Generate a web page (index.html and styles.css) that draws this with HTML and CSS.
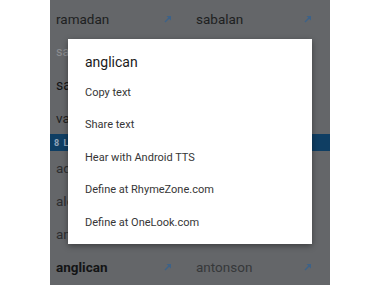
FILE: index.html
```html
<!DOCTYPE html>
<html>
<head>
<meta charset="utf-8">
<link rel="stylesheet" href="styles.css">
</head>
<body>
<div class="screen">
  <div class="list">
    <div class="row">
      <div class="cell"><span class="w w-dark">ramadan</span><svg class="arr" viewBox="0 0 8 8"><path d="M1 7 L5.8 2.2" stroke="currentColor" stroke-width="1.4"/><path d="M2.6 1 H7 V5.4 Z" fill="currentColor"/></svg></div>
      <div class="cell"><span class="w w-dark">sabalan</span><svg class="arr" viewBox="0 0 8 8"><path d="M1 7 L5.8 2.2" stroke="currentColor" stroke-width="1.4"/><path d="M2.6 1 H7 V5.4 Z" fill="currentColor"/></svg></div>
    </div>
    <div class="row">
      <div class="cell"><span class="w w-light">samarkand</span></div>
      <div class="cell"><span class="w w-light">sandarac</span></div>
    </div>
    <div class="row">
      <div class="cell"><span class="w w-black">sarafan</span></div>
      <div class="cell"><span class="w w-black">sassafras</span></div>
    </div>
    <div class="row">
      <div class="cell"><span class="w w-dark">vatican</span></div>
      <div class="cell"><span class="w w-dark">valerian</span></div>
    </div>
    <div class="header">8 LETTERS</div>
    <div class="row">
      <div class="cell"><span class="w w-mid">adamson</span></div>
      <div class="cell"><span class="w w-mid">albanian</span></div>
    </div>
    <div class="row">
      <div class="cell"><span class="w w-mid">alderman</span></div>
      <div class="cell"><span class="w w-mid">alison</span></div>
    </div>
    <div class="row">
      <div class="cell"><span class="w w-mid">andersen</span></div>
      <div class="cell"><span class="w w-mid">anderson</span></div>
    </div>
    <div class="row">
      <div class="cell"><span class="w w-bold">anglican</span><svg class="arr" viewBox="0 0 8 8"><path d="M1 7 L5.8 2.2" stroke="currentColor" stroke-width="1.4"/><path d="M2.6 1 H7 V5.4 Z" fill="currentColor"/></svg></div>
      <div class="cell"><span class="w w-soft">antonson</span><svg class="arr" viewBox="0 0 8 8"><path d="M1 7 L5.8 2.2" stroke="currentColor" stroke-width="1.4"/><path d="M2.6 1 H7 V5.4 Z" fill="currentColor"/></svg></div>
    </div>
  </div>

  <div class="dialog">
    <div class="title">anglican</div>
    <div class="item">Copy text</div>
    <div class="item">Share text</div>
    <div class="item">Hear with Android TTS</div>
    <div class="item">Define at RhymeZone.com</div>
    <div class="item">Define at OneLook.com</div>
  </div>
</div>
</body>
</html>
```
FILE: styles.css
```css
html, body {
  margin: 0;
  padding: 0;
  background: #ffffff;
  font-family: Roboto, "Liberation Sans", sans-serif;
}

.screen {
  position: relative;
  width: 280px;
  height: 285px;
  margin-left: 50px;
  background: #646669;
  overflow: hidden;
}

.list {
  padding-top: 2px;
}

.row {
  display: grid;
  grid-template-columns: 140px 140px;
  height: 33px;
}

.cell {
  display: flex;
  align-items: center;
  justify-content: space-between;
  padding-left: 6px;
  padding-right: 18px;
  overflow: hidden;
  white-space: nowrap;
}

.w {
  font-size: 13.5px;
}

.w-dark { color: #1e1f21; }
.w-light { color: #8c8d90; font-size: 12.5px; }
.w-black { color: #121314; font-size: 14px; }
.w-mid { color: #2c2d2f; }
.w-bold { color: #131415; font-weight: 700; }
.w-soft { color: #36383a; }

.arr {
  width: 8px;
  height: 8px;
  color: #3d6288;
  flex: none;
}

.header {
  height: 17px;
  background: #0f3e63;
  color: #8fa3b8;
  font-size: 9px;
  font-weight: 700;
  letter-spacing: 1px;
  padding-left: 4px;
  display: flex;
  align-items: center;
}

.dialog {
  position: absolute;
  left: 18px;
  top: 39px;
  width: 244px;
  height: 205px;
  box-sizing: border-box;
  background: #ffffff;
  box-shadow: 0 2px 6px rgba(0, 0, 0, 0.4);
  padding: 12px 0 0 17px;
}

.title {
  font-size: 14px;
  font-weight: 400;
  color: #1a1a1a;
  line-height: 22px;
  height: 25px;
}

.item {
  font-size: 11px;
  color: #363636;
  height: 32.5px;
  display: flex;
  align-items: center;
}
```
